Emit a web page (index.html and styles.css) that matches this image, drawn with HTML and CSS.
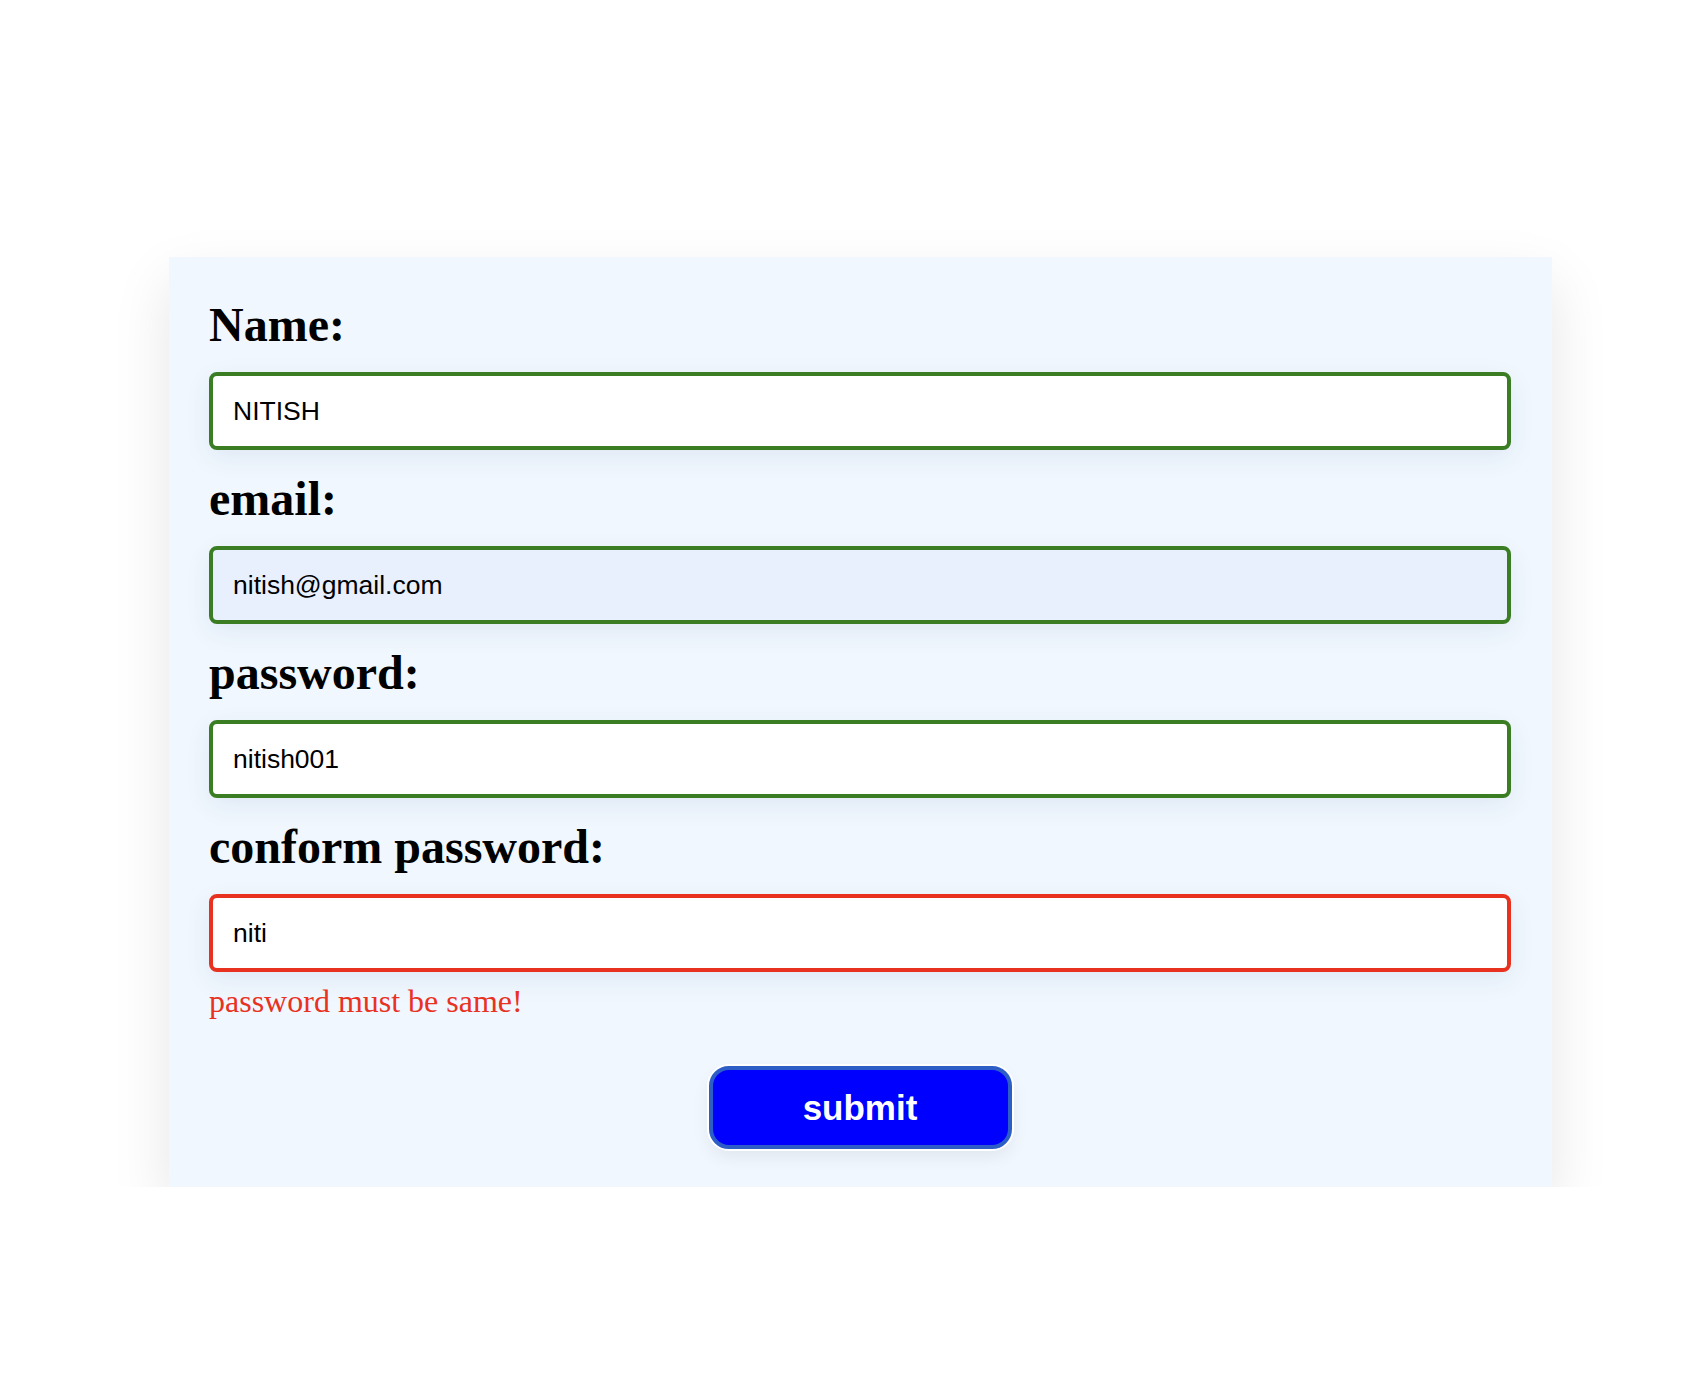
FILE: index.html
```html
<!DOCTYPE html>
<html lang="en">
<head>
<meta charset="utf-8">
<title>Form</title>
<link rel="stylesheet" href="styles.css">
</head>
<body>
<div class="page">
  <form class="card">
    <label class="label" for="name">Name:</label>
    <input class="field valid" id="name" type="text" value="NITISH">
    <label class="label" for="email">email:</label>
    <input class="field valid autofill" id="email" type="text" value="nitish@gmail.com">
    <label class="label" for="pw">password:</label>
    <input class="field valid" id="pw" type="text" value="nitish001">
    <label class="label" for="cpw">conform password:</label>
    <input class="field invalid" id="cpw" type="text" value="niti">
    <div class="error">password must be same!</div>
    <button class="submit" type="button">submit</button>
  </form>
</div>
</body>
</html>
```

FILE: styles.css
```css
html, body {
  margin: 0;
  padding: 0;
  background: #ffffff;
}

.page {
  padding: 257px 0 0 169px;
}

.card {
  box-sizing: border-box;
  width: 1383px;
  background: #f0f7fe;
  padding: 40px 41px 38px 40px;
  display: flex;
  flex-direction: column;
  box-shadow: 0 24px 55px rgba(0, 0, 0, 0.1);
}

.label {
  display: block;
  font-family: "Liberation Serif", "Times New Roman", serif;
  font-weight: bold;
  font-size: 48px;
  line-height: 55px;
  color: #000;
  margin-top: 21px;
}

.label:first-child {
  margin-top: 0;
}

.field {
  box-sizing: border-box;
  display: block;
  width: 100%;
  height: 78px;
  margin: 20px 0 0 0;
  padding: 0 20px;
  border: 4px solid #3a7d23;
  border-radius: 8px;
  background: #ffffff;
  font-family: "Liberation Sans", Arial, sans-serif;
  font-size: 26.5px;
  color: #000;
  outline: none;
  box-shadow: 0 8px 26px rgba(40, 70, 130, 0.08);
}

.field.autofill {
  background: #e8f0fe;
}

.field.invalid {
  border-color: #e8321f;
}

.error {
  font-family: "Liberation Serif", "Times New Roman", serif;
  font-size: 32px;
  line-height: 37px;
  color: #e8321f;
  margin-top: 11px;
}

.submit {
  align-self: center;
  box-sizing: border-box;
  width: 303px;
  height: 83px;
  margin-top: 46px;
  border: 4px solid #2c5ec6;
  border-radius: 20px;
  background: #0000ff;
  color: #ffffff;
  font-family: "Liberation Sans", Arial, sans-serif;
  font-weight: bold;
  font-size: 35px;
  box-shadow: 0 0 0 2px #ffffff, 0 8px 18px rgba(0, 0, 0, 0.07);
  cursor: pointer;
}
```
